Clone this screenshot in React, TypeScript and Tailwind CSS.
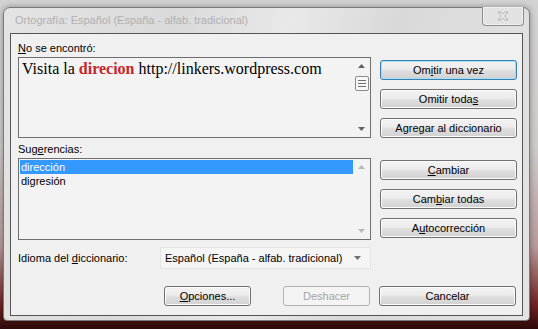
import React from "react";

const ui = { fontFamily: '"Liberation Sans", Arial, sans-serif' };

const Btn = ({
  children,
  className = "",
  focused = false,
  disabled = false,
}: {
  children: React.ReactNode;
  className?: string;
  focused?: boolean;
  disabled?: boolean;
}) => {
  let look =
    "border-[#707070] bg-[linear-gradient(to_bottom,#f3f3f3_0%,#ececec_45%,#dedede_55%,#d2d2d2_100%)] shadow-[inset_0_0_0_1px_#fbfbfb] text-black";
  if (focused)
    look =
      "border-[#3c7fb1] bg-[linear-gradient(to_bottom,#f3f3f3_0%,#ececec_45%,#dedede_55%,#d2d2d2_100%)] shadow-[inset_0_0_0_1px_#9fe0f6] text-black";
  if (disabled)
    look = "border-[#adb2b5] bg-[#f4f4f4] text-[#a3a3a3]";
  return (
    <div
      className={`h-[20px] rounded-[3px] border flex items-center justify-center text-[11px] leading-none ${look} ${className}`}
      style={ui}
    >
      {children}
    </div>
  );
};

const Arrow = ({ up, color }: { up?: boolean; color: string }) => (
  <svg width="7" height="4" viewBox="0 0 7 4">
    {up ? (
      <polygon points="0,4 7,4 3.5,0" fill={color} />
    ) : (
      <polygon points="0,0 7,0 3.5,4" fill={color} />
    )}
  </svg>
);

export default function App() {
  return (
    <div className="w-[538px] h-[329px] overflow-hidden pl-[3px] pt-[7px] bg-[linear-gradient(to_bottom,#d3d3d3_0%,#cfcbcb_45%,#b89a9a_75%,#6e2222_93%,#2e0a0a_100%)]">
      <div className="w-[527px] h-[314px] rounded-t-[7px] rounded-b-[4px] border border-[#7a7a7a] flex flex-col bg-[linear-gradient(100deg,#e4e4e4_0%,#dadada_30%,#e9e9e9_50%,#d9d9d9_68%,#e3e3e3_100%)] shadow-[0_0_6px_rgba(0,0,0,0.35)]">
        {/* title bar */}
        <div className="h-[25px] flex justify-between items-start">
          <div className="pl-[11px] pt-[5px] text-[11px] leading-[14px] text-[#b0b0b0]" style={ui}>
            Ortografía: Español (España - alfab. tradicional)
          </div>
          <div className="mr-[5px] -mt-px w-[42px] h-[19px] rounded-b-[4px] border border-[#8d8d8d] border-t-0 bg-[#e2e2e2] flex items-center justify-center shadow-[inset_0_0_0_1px_#f0f0f0]">
            <svg width="12" height="10" viewBox="0 0 12 10">
              <path
                d="M1 1 L4 1 L6 3 L8 1 L11 1 L7.5 5 L11 9 L8 9 L6 7 L4 9 L1 9 L4.5 5 Z"
                fill="#e8e8e8"
                stroke="#a8a8a8"
                strokeWidth="0.8"
              />
            </svg>
          </div>
        </div>

        {/* client area */}
        <div className="ml-[6px] w-[513px] h-[283px] border border-[#555555] bg-[#f0f0f0] pl-[7px] pt-[8px] flex flex-col text-[11px] text-black" style={ui}>
          {/* not found */}
          <div className="flex gap-[9px]">
            <div className="w-[353px] flex flex-col">
              <div className="h-[15px] leading-[13px]">
                <u>N</u>o se encontró:
              </div>
              <div className="h-[81px] border border-[#6f6f6f] bg-[#f3f3f3] flex">
                <div className="flex-1 pl-[3px] pt-[2px] text-[16px] leading-[18px]" style={{ fontFamily: '"Liberation Serif", "Times New Roman", serif' }}>
                  Visita la <b className="text-[#c4262b]">direcion</b> http://linkers.wordpress.com
                </div>
                <div className="w-[17px] flex flex-col items-center">
                  <div className="h-[16px] flex items-center justify-center">
                    <Arrow up color="#606060" />
                  </div>
                  <div className="mt-[2px] w-[14px] h-[15px] rounded-[2px] border border-[#8c8c8c] bg-[#f7f7f7] flex flex-col items-center justify-center gap-[2px]">
                    <div className="w-[8px] h-px bg-[#6e6e6e]" />
                    <div className="w-[8px] h-px bg-[#6e6e6e]" />
                    <div className="w-[8px] h-px bg-[#6e6e6e]" />
                  </div>
                  <div className="flex-1" />
                  <div className="h-[16px] flex items-center justify-center">
                    <Arrow color="#606060" />
                  </div>
                </div>
              </div>
            </div>
            <div className="pt-[18px] flex flex-col gap-[9px] w-[137px]">
              <Btn focused>
                <span>
                  Om<u>i</u>tir una vez
                </span>
              </Btn>
              <Btn>
                <span>
                  Omitir toda<u>s</u>
                </span>
              </Btn>
              <Btn>Agregar al diccionario</Btn>
            </div>
          </div>

          {/* suggestions */}
          <div className="flex gap-[9px] mt-[5px]">
            <div className="w-[353px] flex flex-col">
              <div className="h-[15px] leading-[13px]">
                Sug<u>e</u>rencias:
              </div>
              <div className="h-[82px] border border-[#6f6f6f] bg-[#f3f3f3] flex">
                <div className="flex-1 pl-px pt-px flex flex-col">
                  <div className="h-[14px] leading-[14px] bg-[#3399ff] text-white pl-px">dirección</div>
                  <div className="h-[14px] leading-[14px] pl-px">digresión</div>
                </div>
                <div className="w-[17px] flex flex-col items-center">
                  <div className="h-[16px] flex items-center justify-center">
                    <Arrow up color="#b8b8b8" />
                  </div>
                  <div className="flex-1" />
                  <div className="h-[16px] flex items-center justify-center">
                    <Arrow color="#b8b8b8" />
                  </div>
                </div>
              </div>
            </div>
            <div className="pt-[17px] flex flex-col gap-[9px] w-[137px]">
              <Btn>
                <span>
                  <u>C</u>ambiar
                </span>
              </Btn>
              <Btn>
                <span>
                  Cam<u>b</u>iar todas
                </span>
              </Btn>
              <Btn>
                <span>
                  A<u>u</u>tocorrección
                </span>
              </Btn>
            </div>
          </div>

          {/* language */}
          <div className="mt-[7px] h-[22px] flex items-center">
            <div className="w-[142px]">
              Idioma del <u>d</u>iccionario:
            </div>
            <div className="w-[211px] h-[22px] border border-[#e4e4e4] bg-[#f5f5f5] flex items-center justify-between pl-[4px] pr-[9px]">
              <span>Español (España - alfab. tradicional)</span>
              <Arrow color="#707070" />
            </div>
          </div>

          {/* bottom buttons */}
          <div className="mt-[17px] flex">
            <Btn className="ml-[146px] w-[87px]">
              <span>
                <u>O</u>pciones...
              </span>
            </Btn>
            <Btn disabled className="ml-[32px] w-[87px]">
              Deshacer
            </Btn>
            <Btn className="ml-[9px] w-[137px]">Cancelar</Btn>
          </div>
        </div>
      </div>
    </div>
  );
}
